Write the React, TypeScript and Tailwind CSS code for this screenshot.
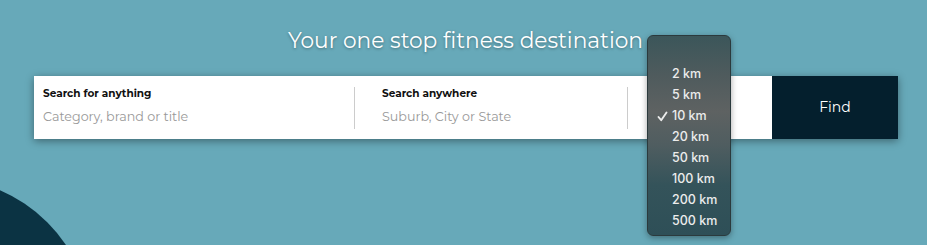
import React from "react";

const items = ["2 km", "5 km", "10 km", "20 km", "50 km", "100 km", "200 km", "500 km"];

export default function App() {
  return (
    <div className="relative w-[927px] h-[245px] overflow-hidden bg-[#67a9b9]" style={{ fontFamily: "Montserrat, 'Noto Sans', sans-serif" }}>
      <div className="absolute left-[-212px] top-[178px] w-[304px] h-[304px] rounded-full bg-[#0b3343]" />
      <div className="relative flex flex-col">
        <h1 className="mt-[25px] h-[30px] pl-[4px] text-center text-[21.7px] leading-[30px] text-white [text-shadow:0_1px_3px_rgba(0,0,0,0.35)]">
          Your one stop fitness destination
        </h1>
        <div className="ml-[34px] mt-[21px] flex h-[63px] w-[864px] shadow-[0_2px_8px_rgba(0,0,0,0.4)]">
          <div className="flex flex-1 items-center bg-white">
            <div className="-mt-[4px] flex w-[320px] flex-col pl-[9px]">
              <span className="text-[10.5px] font-bold leading-[14px] text-[#111]">Search for anything</span>
              <span className="mt-[8px] text-[12.7px] leading-[16px] text-[#999]">Category, brand or title</span>
            </div>
            <div className="h-[42px] w-px bg-[#ccc]" />
            <div className="-mt-[4px] flex w-[272px] flex-col pl-[27px]">
              <span className="text-[10.5px] font-bold leading-[14px] text-[#111]">Search anywhere</span>
              <span className="mt-[8px] text-[12.7px] leading-[16px] text-[#999]">Suburb, City or State</span>
            </div>
            <div className="h-[42px] w-px bg-[#ccc]" />
          </div>
          <button className="flex w-[126px] items-center justify-center bg-[#041f2d] text-[14px] text-white">
            Find
          </button>
        </div>
      </div>
      <div
        className="absolute left-[647px] top-[35px] w-[84px] h-[201px] rounded-[6px] border border-[#2b3a3d] bg-[linear-gradient(180deg,#3b565a_0%,#4f5b5d_20%,#5e6262_38%,#4f5d60_55%,#34535a_75%,#2e4f57_100%)] shadow-[0_2px_6px_rgba(0,0,0,0.35)]"
        style={{ fontFamily: "Inter, 'Noto Sans', sans-serif" }}
      >
        <div className="flex flex-col pt-[27px]">
          {items.map((it) => (
            <div key={it} className="relative h-[21px] pl-[24px] text-[12.5px] font-medium leading-[21px] text-[#ececec]">
              {it === "10 km" && (
                <svg className="absolute left-[9px] top-[6px]" width="11" height="11" viewBox="0 0 11 11">
                  <path d="M1.5 6 L4.2 9.2 L9.5 1.5" fill="none" stroke="#ececec" strokeWidth="1.9" strokeLinecap="round" strokeLinejoin="round" />
                </svg>
              )}
              {it}
            </div>
          ))}
        </div>
      </div>
    </div>
  );
}
